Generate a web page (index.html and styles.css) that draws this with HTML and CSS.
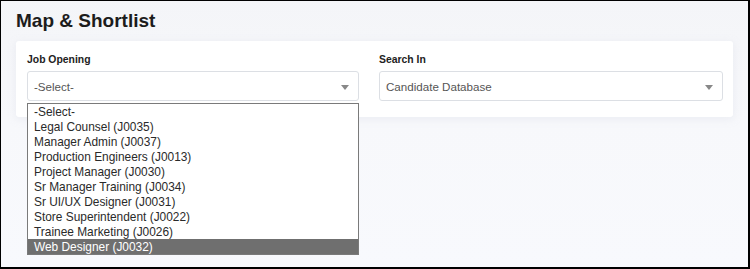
FILE: index.html
```html
<!DOCTYPE html>
<html>
<head>
<meta charset="utf-8">
<link rel="stylesheet" href="styles.css">
</head>
<body>
<div class="frame">
  <h1 class="title">Map &amp; Shortlist</h1>
  <div class="card">
    <div class="field">
      <div class="label">Job Opening</div>
      <div class="select">
        <span>-Select-</span>
        <span class="caret"></span>
      </div>
      <div class="listbox">
        <div class="opt">-Select-</div>
        <div class="opt">Legal Counsel (J0035)</div>
        <div class="opt">Manager Admin (J0037)</div>
        <div class="opt">Production Engineers (J0013)</div>
        <div class="opt">Project Manager (J0030)</div>
        <div class="opt">Sr Manager Training (J0034)</div>
        <div class="opt">Sr UI/UX Designer (J0031)</div>
        <div class="opt">Store Superintendent (J0022)</div>
        <div class="opt">Trainee Marketing (J0026)</div>
        <div class="opt active">Web Designer (J0032)</div>
      </div>
    </div>
    <div class="field">
      <div class="label">Search In</div>
      <div class="select">
        <span>Candidate Database</span>
        <span class="caret"></span>
      </div>
    </div>
  </div>
</div>
</body>
</html>
```
FILE: styles.css
```css
* { box-sizing: border-box; }
html, body { margin: 0; padding: 0; }
body {
  font-family: "Liberation Sans", Arial, sans-serif;
  background: #000;
}
.frame {
  width: 750px;
  height: 269px;
  border-style: solid;
  border-color: #000;
  border-width: 1px 2px 2px 1px;
  background: linear-gradient(180deg, #f4f5f8 0%, #f7f8fb 45%, #f8f9fd 100%);
  padding: 0 15px 0 15px;
  overflow: hidden;
}
.title {
  margin: 0;
  padding-top: 9px;
  height: 40px;
  font-size: 19px;
  line-height: 22px;
  font-weight: bold;
  color: #1c1c1c;
}
.card {
  background: #fff;
  border-radius: 3px;
  height: 76px;
  width: 717px;
  padding: 12px 10px 0 11px;
  display: grid;
  grid-template-columns: 332px 344px;
  column-gap: 20px;
  box-shadow: 0 2px 8px rgba(200, 205, 220, 0.25);
}
.field { position: relative; }
.label {
  font-size: 10.4px;
  font-weight: bold;
  color: #222;
  line-height: 14px;
  height: 18px;
}
.select {
  height: 30px;
  border: 1px solid #dcdfe4;
  border-radius: 3px;
  display: flex;
  align-items: center;
  justify-content: space-between;
  padding: 0 9px 0 6px;
  font-size: 11.6px;
  color: #555;
  background: #fff;
}
.caret {
  width: 0;
  height: 0;
  border-left: 4px solid transparent;
  border-right: 4px solid transparent;
  border-top: 5px solid #888;
  margin-top: 2px;
}
.listbox {
  position: absolute;
  left: 0;
  top: 50px;
  width: 332px;
  border: 1px solid #7a7a7a;
  background: #fff;
  z-index: 2;
}
.opt {
  height: 15px;
  line-height: 15px;
  padding-top: 1px;
  font-size: 11.9px;
  color: #2a2a2a;
  padding-left: 6px;
  white-space: nowrap;
}
.opt.active {
  background: #6f6f6f;
  color: #fff;
}
```
